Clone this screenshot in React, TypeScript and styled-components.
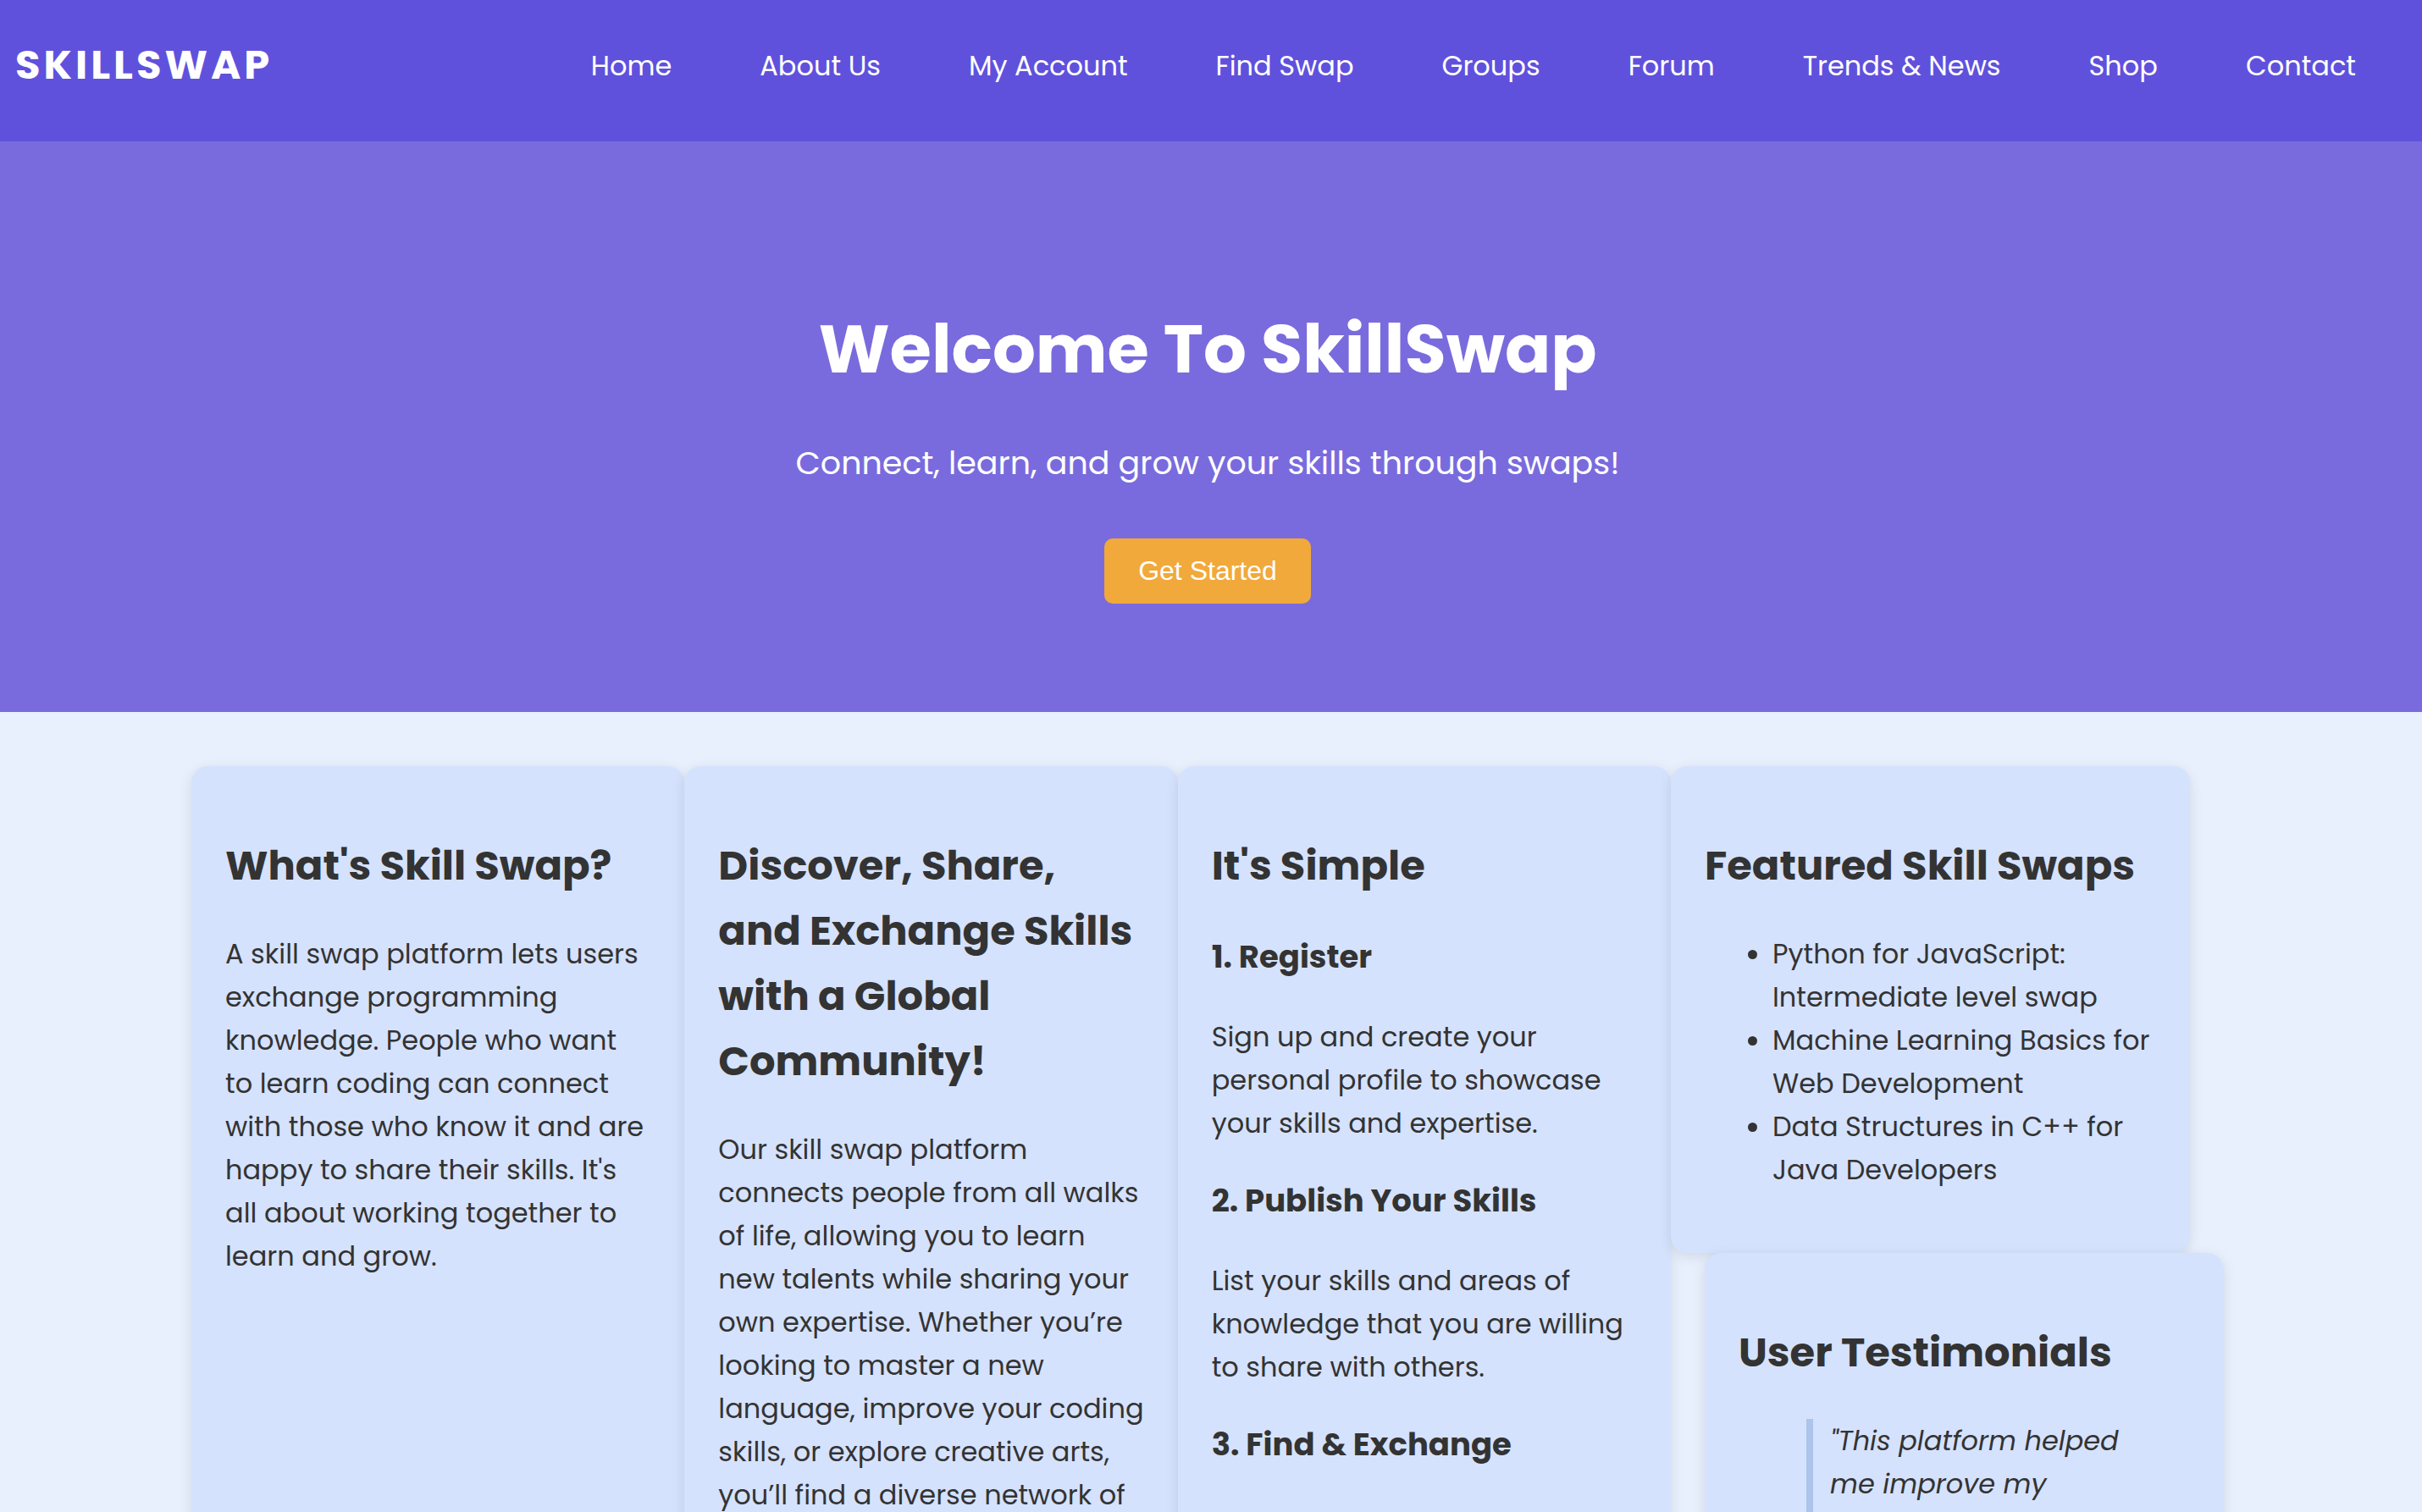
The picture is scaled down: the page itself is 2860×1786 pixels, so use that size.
import React, { Fragment } from 'react';
import styled, { createGlobalStyle } from 'styled-components';

const GlobalStyle = createGlobalStyle`
  *, *::before, *::after { box-sizing: border-box; }
  body {
    margin: 0;
    background: #e8effd;
    color: #333;
    font-family: Poppins, Inter, 'Liberation Sans', sans-serif;
    font-size: 32px;
    line-height: 51px;
  }
`;

const Page = styled.div`
  height: 100vh;
  overflow: hidden;
`;

const Header = styled.header`
  display: flex;
  justify-content: space-between;
  align-items: flex-start;
  height: 167px;
  padding: 38px 78px 0 18px;
  background: #6051dd;
  color: #fff;
`;

const Logo = styled.a`
  color: inherit;
  font-size: 48px;
  font-weight: 700;
  line-height: 77px;
  letter-spacing: 4px;
  text-decoration: none;
`;

const NavList = styled.ul`
  display: flex;
  gap: 104px;
  margin: 0;
  padding: 14px 0 0;
  list-style: none;
`;

const NavLink = styled.a`
  color: inherit;
  text-decoration: none;
  white-space: nowrap;
`;

const Hero = styled.section`
  display: flex;
  flex-direction: column;
  align-items: center;
  height: 674px;
  padding: 181px 8px 0 0;
  background: #796bdd;
  color: #fff;
  text-align: center;
`;

const HeroTitle = styled.h1`
  margin: 0;
  font-size: 80px;
  font-weight: 700;
  line-height: 128px;
`;

const HeroText = styled.p`
  margin: 40px 0 58px;
  font-size: 38px;
  line-height: 62px;
`;

const HeroButton = styled.button`
  height: 77px;
  padding: 0 40px;
  border: 0;
  border-radius: 10px;
  background: #f1a93b;
  color: #fff;
  font: 32px 'Liberation Sans', Arial, sans-serif;
  cursor: pointer;
`;

const Main = styled.main`
  padding: 64px 8px 0 0;
`;

const CardGrid = styled.div`
  display: grid;
  grid-template-columns: repeat(3, minmax(0, 1fr)) 653px;
  max-width: 2400px;
  min-height: 100vh;
  margin: 0 auto;
`;

const SideColumn = styled.div`
  display: flex;
  flex-direction: column;
  min-width: 0;
`;

const Card = styled.section<{ $side?: 'left' | 'right' }>`
  position: relative;
  flex: ${(p) => (p.$side === 'right' ? 1 : 'none')};
  margin-left: ${(p) => (p.$side === 'right' ? 40 : 0)}px;
  margin-right: ${(p) => (p.$side === 'left' ? 40 : 0)}px;
  padding: 40px;
  border-radius: 20px;
  background: #d5e2fd;
  box-shadow: 0 4px 16px rgba(0, 0, 0, 0.1);
  white-space: nowrap;
`;

const CardTitle = styled.h2`
  margin: 39px 0 40px;
  font-size: 48px;
  font-weight: 700;
  line-height: 77px;
`;

const StepTitle = styled.h3`
  margin: 37px 0 40px;
  font-size: 37px;
  font-weight: 700;
  line-height: 58px;
`;

const Text = styled.p`
  margin: 0;
`;

const SwapList = styled.ul`
  margin: 0 0 33px;
  padding: 0 0 0 80px;
`;

const Quote = styled.blockquote`
  margin: 0 80px;
  padding: 0 0 40px 20px;
  border-left: 8px solid #adc4ec;
  font-style: italic;
`;

const Lines = ({ of }: { of: string[] }) => (
  <>
    {of.map((line, i) => (
      <Fragment key={line}>
        {i > 0 && <br />}
        {line}
      </Fragment>
    ))}
  </>
);

const links = ['Home', 'About Us', 'My Account', 'Find Swap', 'Groups', 'Forum', 'Trends & News', 'Shop', 'Contact'];

const steps = [
  { title: '1. Register', text: ['Sign up and create your', 'personal profile to showcase', 'your skills and expertise.'] },
  { title: '2. Publish Your Skills', text: ['List your skills and areas of', 'knowledge that you are willing', 'to share with others.'] },
  { title: '3. Find & Exchange', text: [] },
];

const swaps = [
  ['Python for JavaScript:', 'Intermediate level swap'],
  ['Machine Learning Basics for', 'Web Development'],
  ['Data Structures in C++ for', 'Java Developers'],
];

export default function App() {
  return (
    <Page>
      <GlobalStyle />
      <Header>
        <Logo href="#">SKILLSWAP</Logo>
        <nav>
          <NavList>
            {links.map((label) => (
              <li key={label}>
                <NavLink href="#">{label}</NavLink>
              </li>
            ))}
          </NavList>
        </nav>
      </Header>
      <Hero>
        <HeroTitle>Welcome To SkillSwap</HeroTitle>
        <HeroText>Connect, learn, and grow your skills through swaps!</HeroText>
        <HeroButton type="button">Get Started</HeroButton>
      </Hero>
      <Main>
        <CardGrid>
          <Card>
            <CardTitle>What's Skill Swap?</CardTitle>
            <Text>
              <Lines
                of={[
                  'A skill swap platform lets users',
                  'exchange programming',
                  'knowledge. People who want',
                  'to learn coding can connect',
                  'with those who know it and are',
                  "happy to share their skills. It's",
                  'all about working together to',
                  'learn and grow.',
                ]}
              />
            </Text>
          </Card>
          <Card>
            <CardTitle>
              <Lines of={['Discover, Share,', 'and Exchange Skills', 'with a Global', 'Community!']} />
            </CardTitle>
            <Text>
              <Lines
                of={[
                  'Our skill swap platform',
                  'connects people from all walks',
                  'of life, allowing you to learn',
                  'new talents while sharing your',
                  'own expertise. Whether you’re',
                  'looking to master a new',
                  'language, improve your coding',
                  'skills, or explore creative arts,',
                  'you’ll find a diverse network of',
                ]}
              />
            </Text>
          </Card>
          <Card>
            <CardTitle>It's Simple</CardTitle>
            {steps.map((step) => (
              <Fragment key={step.title}>
                <StepTitle>{step.title}</StepTitle>
                {step.text.length > 0 && (
                  <Text>
                    <Lines of={step.text} />
                  </Text>
                )}
              </Fragment>
            ))}
          </Card>
          <SideColumn>
            <Card $side="left">
              <CardTitle>Featured Skill Swaps</CardTitle>
              <SwapList>
                {swaps.map((swap) => (
                  <li key={swap[0]}>
                    <Lines of={swap} />
                  </li>
                ))}
              </SwapList>
            </Card>
            <Card $side="right">
              <CardTitle>User Testimonials</CardTitle>
              <Quote>
                <Lines of={['"This platform helped', 'me improve my']} />
              </Quote>
            </Card>
          </SideColumn>
        </CardGrid>
      </Main>
    </Page>
  );
}
